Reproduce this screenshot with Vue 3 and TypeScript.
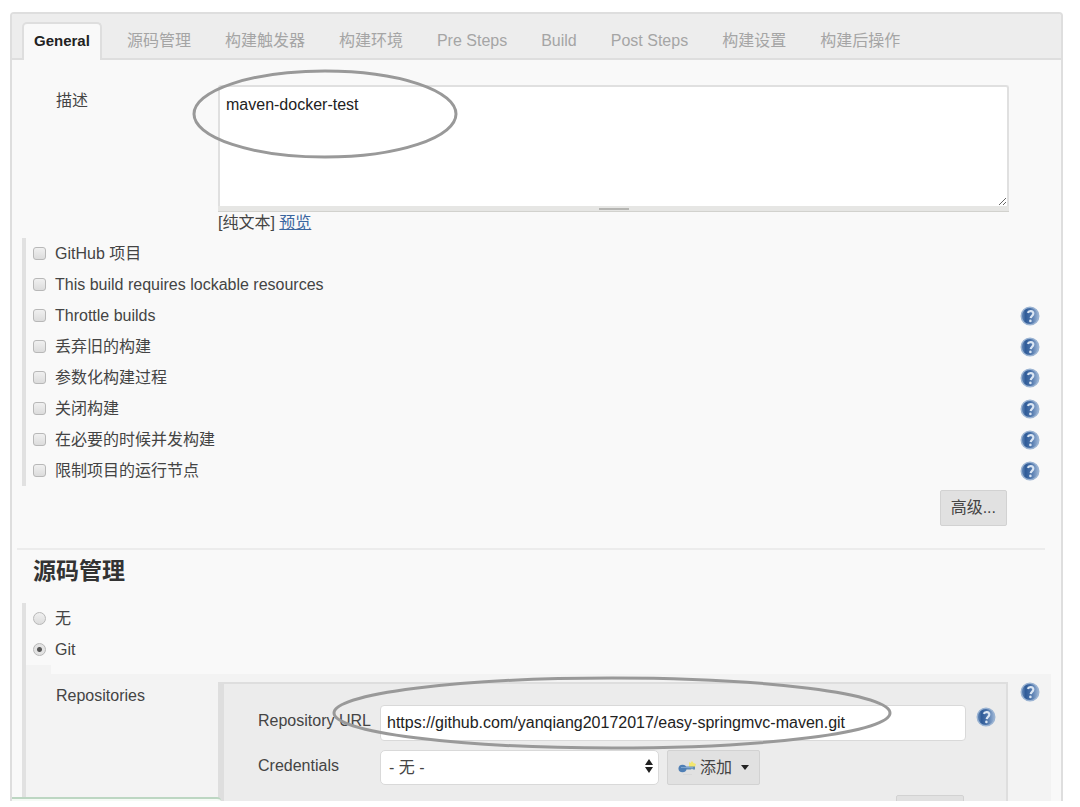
<script setup lang="ts">
import { ref } from 'vue'

interface Option {
  id: string
  label: string
  help: boolean
}

const tabs = ['General', '源码管理', '构建触发器', '构建环境', 'Pre Steps', 'Build', 'Post Steps', '构建设置', '构建后操作']
const activeTab = ref('General')

const options: Option[] = [
  { id: 'github', label: 'GitHub 项目', help: false },
  { id: 'lockable', label: 'This build requires lockable resources', help: false },
  { id: 'throttle', label: 'Throttle builds', help: true },
  { id: 'discard', label: '丢弃旧的构建', help: true },
  { id: 'params', label: '参数化构建过程', help: true },
  { id: 'disable', label: '关闭构建', help: true },
  { id: 'concurrent', label: '在必要的时候并发构建', help: true },
  { id: 'restrict', label: '限制项目的运行节点', help: true },
]
const checked = ref<string[]>([])

const description = ref('maven-docker-test')
const scm = ref('git')
const repositoryUrl = ref('https://github.com/yanqiang20172017/easy-springmvc-maven.git')
const credentials = ref('none')
</script>

<template>
  <div class="page">
    <svg class="defs" aria-hidden="true">
      <defs>
        <linearGradient id="ball" x1="0" x2="1" y1="0" y2="0">
          <stop offset="0" stop-color="#6f91bd" />
          <stop offset="0.25" stop-color="#2f5b98" />
          <stop offset="0.55" stop-color="#4a72a9" />
          <stop offset="1" stop-color="#9db6d6" />
        </linearGradient>
        <symbol id="help" viewBox="0 0 20 20">
          <circle cx="10" cy="10" r="8.800" fill="url(#ball)" stroke="#9ab3d2" stroke-width="1.400" />
          <path d="M7.800 6.800C8.600 4.300 13.600 4.400 13.300 7.600C13.100 9.600 11 9.900 10.700 12.200" fill="none" stroke="#dbe6f3" stroke-width="2.200" />
          <circle cx="10.400" cy="14.900" r="1.300" fill="#dbe6f3" />
        </symbol>
      </defs>
    </svg>

    <form class="panel" @submit.prevent>
      <nav class="tabs">
        <button
          v-for="tab in tabs"
          :key="tab"
          type="button"
          class="tab"
          :class="{ active: tab === activeTab }"
          @click="activeTab = tab"
        >{{ tab }}</button>
      </nav>

      <section class="description">
        <label for="description" class="side-label">描述</label>
        <div class="description-field">
          <textarea id="description" v-model="description"></textarea>
          <div class="handle"><span></span></div>
          <p class="format">[纯文本] <a href="#preview">预览</a></p>
          <svg class="ring ring-description" viewBox="0 0 266 90" preserveAspectRatio="none" aria-hidden="true">
            <ellipse cx="133" cy="45" rx="131" ry="43" />
          </svg>
        </div>
      </section>

      <section class="options">
        <div v-for="option in options" :key="option.id" class="row">
          <input :id="option.id" v-model="checked" type="checkbox" :value="option.id" />
          <label :for="option.id">{{ option.label }}</label>
          <button v-if="option.help" type="button" class="help" :aria-label="'Help: ' + option.label">
            <svg><use href="#help" /></svg>
          </button>
        </div>
      </section>

      <div class="advanced">
        <button type="button" class="btn">高级...</button>
      </div>

      <h2>源码管理</h2>

      <section class="scm">
        <div class="row">
          <input id="scm-none" v-model="scm" type="radio" name="scm" value="none" />
          <label for="scm-none">无</label>
        </div>
        <div class="row">
          <input id="scm-git" v-model="scm" type="radio" name="scm" value="git" />
          <label for="scm-git">Git</label>
        </div>

        <div class="git">
          <span class="git-label">Repositories</span>
          <div class="repository">
            <div class="field">
              <label for="url">Repository URL</label>
              <input id="url" v-model="repositoryUrl" type="text" />
              <button type="button" class="help" aria-label="Help: Repository URL">
                <svg><use href="#help" /></svg>
              </button>
            </div>
            <div class="field">
              <label for="credentials">Credentials</label>
              <div class="select">
                <select id="credentials" v-model="credentials">
                  <option value="none">- 无 -</option>
                </select>
                <svg viewBox="0 0 8 14" aria-hidden="true">
                  <path d="M4 0L8 6H0ZM4 14L0 8H8Z" fill="#222" />
                </svg>
              </div>
              <button type="button" class="btn add">
                <svg class="key" viewBox="0 0 18 16" aria-hidden="true">
                  <path d="M11 2l1.500 1L14 1l1.500 2L18 4l-1 3h-6z" fill="#f2e671" />
                  <path d="M7 6.500h10v3h-2l-1-1-1 1H7z" fill="#5f8bb8" />
                  <ellipse cx="4.500" cy="8.500" rx="4" ry="3.800" fill="#4f7fb5" />
                  <path d="M3 7.500h12" stroke="#7fa5cf" />
                  <path d="M5 14.500h9" stroke="#d8d8d8" />
                </svg>
                <span>添加</span>
                <svg class="caret" viewBox="0 0 8 5" aria-hidden="true"><path d="M0 0h8L4 5z" fill="#222" /></svg>
              </button>
            </div>
            <div class="repository-foot">
              <button type="button" class="btn" aria-label="Advanced repository options"></button>
            </div>
            <svg class="ring ring-url" viewBox="0 0 560 74" preserveAspectRatio="none" aria-hidden="true">
              <ellipse cx="280" cy="37" rx="278" ry="35" />
            </svg>
          </div>
          <button type="button" class="help" aria-label="Help: Repositories">
            <svg><use href="#help" /></svg>
          </button>
        </div>
      </section>
      <div class="status"></div>
    </form>
  </div>
</template>

<style>
body {
  background: #fff;
}
</style>

<style scoped>
.page {
  padding: 12px 17px 6px 10px;
  color: #444;
  font: 16px/20px "Liberation Sans", "Noto Sans CJK SC", sans-serif;
}
* {
  box-sizing: border-box;
}
button,
input,
select,
textarea {
  margin: 0;
  font: inherit;
  color: inherit;
}
.defs {
  position: absolute;
  width: 0;
  height: 0;
}
.panel {
  position: relative;
  overflow: hidden;
  border: solid #dedede;
  border-width: 2px 2px 0;
  border-radius: 4px 4px 0 0;
  background: #f9f9f9;
}
.tabs {
  display: flex;
  align-items: flex-end;
  height: 46px;
  padding-left: 10px;
  border-bottom: 2px solid #dedede;
  background: #ededed;
}
.tab {
  height: 38px;
  margin-bottom: -2px;
  padding: 0 17px;
  border: 0;
  background: none;
  color: #a5a5a5;
  white-space: nowrap;
}
.tab.active {
  margin-right: 8px;
  padding: 0 10px 3px;
  border: 2px solid #dedede;
  border-bottom: 0;
  border-radius: 5px 5px 0 0;
  background: #f9f9f9;
  color: #222;
  font-size: 15px;
  font-weight: bold;
}
.description {
  display: flex;
  padding: 25px 52px 0 44px;
}
.side-label {
  width: 162px;
  padding-top: 6px;
}
.description-field {
  position: relative;
  flex: 1;
}
textarea {
  display: block;
  width: 100%;
  height: 121px;
  padding: 8px 6px;
  border: 2px solid #e0e0e0;
  border-bottom: 0;
  border-radius: 3px 3px 0 0;
  outline: 0;
  background: #fff;
  color: #222;
  resize: vertical;
}
.handle {
  display: flex;
  justify-content: center;
  align-items: center;
  height: 6px;
  border-bottom: 1px solid #d2d2ce;
  background: #e6e6e4;
}
.handle span {
  width: 30px;
  height: 2px;
  background: #b5b5b2;
}
.format {
  margin: 0;
  padding-top: 1px;
  line-height: 20px;
}
.format a {
  color: #3a669f;
}
.ring {
  position: absolute;
  overflow: visible;
  pointer-events: none;
}
.ring ellipse {
  fill: none;
  stroke: #999;
  stroke-width: 3;
}
.ring-description {
  top: -16px;
  left: -26px;
  width: 266px;
  height: 90px;
}
.options {
  margin: 5px 10px 0;
  border-left: 4px solid #e1e1e1;
}
.row {
  display: flex;
  align-items: center;
  height: 31px;
  padding-left: 7px;
}
.row input {
  appearance: none;
  flex: none;
  width: 13px;
  height: 13px;
  margin: 0 9px 0 0;
  border: 1px solid #b8b8b8;
  border-radius: 3px;
  background: linear-gradient(#f0f0f0, #dcdcdc);
}
.row input[type="radio"] {
  border-radius: 50%;
}
.row input[type="radio"]:checked {
  background: radial-gradient(circle, #555 0 2px, #e3e3e3 3px);
}
.row input[type="checkbox"]:checked {
  background: #777;
}
.help {
  flex: none;
  width: 20px;
  height: 20px;
  padding: 0;
  border: 0;
  background: none;
}
.help svg {
  display: block;
  width: 20px;
  height: 20px;
}
.row .help {
  margin: 0 11px 0 auto;
}
.advanced {
  display: flex;
  justify-content: flex-end;
  margin: 0 16px 0 5px;
  padding: 4px 38px 22px 0;
  border-bottom: 2px solid #ececec;
}
.btn {
  height: 36px;
  padding: 0 10px;
  border: 1px solid #d2d2d2;
  border-radius: 2px;
  background: #e1e1e1;
  color: #444;
}
h2 {
  margin: 7px 21px 18px;
  color: #333;
  font-size: 23px;
  line-height: 28px;
}
.scm {
  margin: 0 10px;
  border-left: 4px solid #e1e1e1;
}
.git {
  display: flex;
  height: 136px;
  padding-left: 30px;
  background: linear-gradient(#f9f9f9, #f9f9f9) 25px 0 / 100% 9px no-repeat #f3f3f3;
}
.git-label {
  width: 162px;
  padding-top: 21px;
}
.repository {
  position: relative;
  flex: 1;
  margin-top: 17px;
  padding: 21px 10px 0 34px;
  border: solid #dedede;
  border-width: 2px 2px 0 6px;
  background: #ececec;
}
.git > .help {
  margin: 17px 11px 0 12px;
}
.field {
  display: flex;
  height: 45px;
}
.field label {
  width: 122px;
  padding-top: 6px;
  white-space: nowrap;
}
.field input {
  flex: 1;
  min-width: 0;
  height: 36px;
  padding: 0 6px;
  border: 1px solid #d9d9d9;
  border-radius: 4px;
  outline: 0;
  background: #fff;
  color: #222;
}
.field .help {
  margin: 2px 0 0 10px;
}
.select {
  position: relative;
  width: 279px;
  height: 35px;
}
.select select {
  appearance: none;
  width: 100%;
  height: 100%;
  padding: 0 8px;
  border: 1px solid #d9d9d9;
  border-radius: 5px;
  background: #fff;
}
.select svg {
  position: absolute;
  top: 9px;
  right: 6px;
  width: 8px;
  height: 14px;
}
.add {
  display: flex;
  align-items: center;
  height: 35px;
  margin-left: 8px;
}
.key {
  width: 18px;
  height: 16px;
  margin-right: 4px;
}
.caret {
  width: 8px;
  height: 5px;
  margin-left: 9px;
}
.repository-foot {
  display: flex;
  justify-content: flex-end;
  height: 6px;
  padding-right: 32px;
  overflow: hidden;
}
.repository-foot .btn {
  width: 68px;
}
.ring-url {
  top: -8px;
  left: 108px;
  width: 560px;
  height: 74px;
}
.status {
  position: absolute;
  bottom: 0;
  left: 0;
  width: 209px;
  height: 4px;
  border-top: 2px solid #bcd6c2;
  border-radius: 0 4px 0 0;
  background: #f5faf5;
}
</style>
